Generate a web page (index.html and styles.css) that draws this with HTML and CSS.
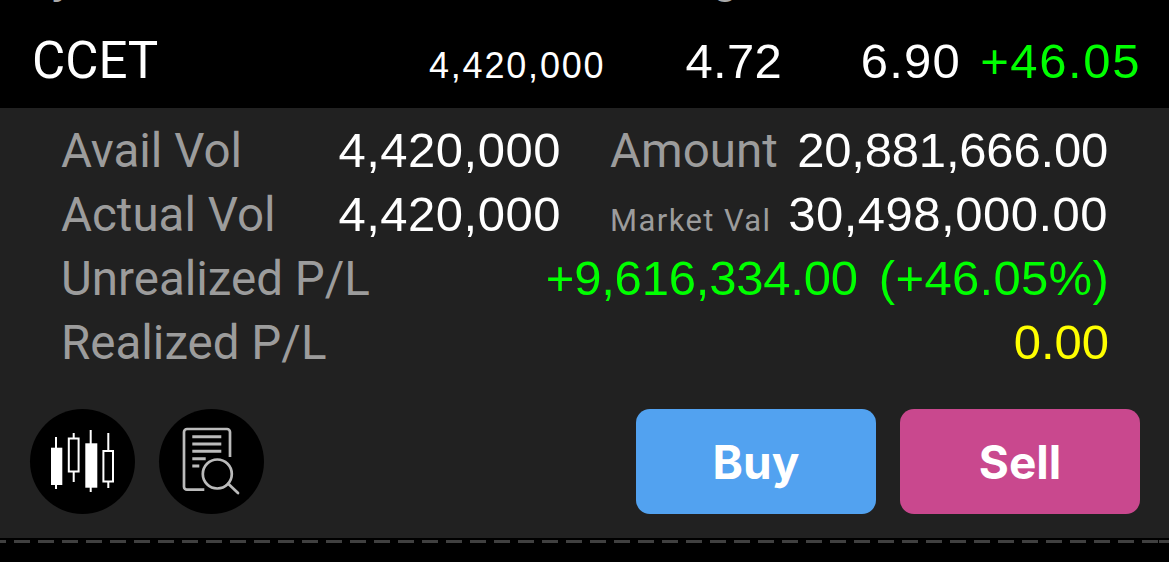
FILE: index.html
```html
<!DOCTYPE html>
<html lang="en">
<head>
    <meta charset="UTF-8">
    <meta name="viewport" content="width=device-width, initial-scale=1.0">
    <title>Portfolio</title>
    <link rel="stylesheet" href="styles.css">
</head>
<body>
    <div class="prev-row"><span class="prev-name">y</span><span class="prev-cell">g</span></div>

    <div class="stock-row">
        <div class="stock-name">CCET</div>
        <div class="stock-vol">4,420,000</div>
        <div class="stock-cost">4.72</div>
        <div class="stock-last">6.90</div>
        <div class="stock-pct">+46.05</div>
    </div>

    <div class="panel">
        <div class="pair-rows">
            <div class="pair"><span class="label">Avail Vol</span><span class="val-vol">4,420,000</span></div>
            <div class="pair"><span class="label">Amount</span><span class="val-narrow">20,881,666.00</span></div>
            <div class="pair"><span class="label">Actual Vol</span><span class="val-vol">4,420,000</span></div>
            <div class="pair"><span class="label label-small">Market Val</span><span class="val-wide">30,498,000.00</span></div>
        </div>
        <div class="pair"><span class="label">Unrealized P/L</span><span class="up">+9,616,334.00<span class="up-pct">(+46.05%)</span></span></div>
        <div class="pair"><span class="label">Realized P/L</span><span class="flat">0.00</span></div>

        <div class="actions">
            <div class="round-btn">
                <svg viewBox="0 0 105 105" width="105" height="105">
                    <g stroke="#fff" stroke-width="2" fill="none">
                        <path d="M26 28v52M43.7 24v49M60.7 21v62M78.3 24v55"/>
                    </g>
                    <rect x="21" y="38.7" width="11.3" height="37.3" fill="#fff"/>
                    <rect x="38.8" y="29.5" width="9.8" height="33" fill="#000" stroke="#fff" stroke-width="2"/>
                    <rect x="55.3" y="34.3" width="12" height="44.4" fill="#fff"/>
                    <rect x="73.4" y="42" width="9.6" height="30.5" fill="#000" stroke="#fff" stroke-width="2"/>
                </svg>
            </div>
            <div class="round-btn">
                <svg viewBox="0 0 105 105" width="105" height="105">
                    <g stroke="#bbb" fill="none">
                        <path stroke-width="2.7" d="M45.3 80.7H28a3 3 0 0 1-3-3V23a3 3 0 0 1 3-3h40a3 3 0 0 1 3 3v25"/>
                        <path stroke-width="3" d="M33.3 27.7h29M33.3 35h29M33.3 42.3h29M33.3 49.7h13.4M33.3 57h7"/>
                        <circle stroke-width="2.7" cx="58.3" cy="65" r="14.5"/>
                        <path stroke-width="2.7" stroke-linecap="round" d="M69.5 75l9.5 9"/>
                    </g>
                </svg>
            </div>
            <div class="trade-btn buy">Buy</div>
            <div class="trade-btn sell">Sell</div>
        </div>
    </div>

    <div class="divider"></div>
</body>
</html>
```

FILE: styles.css
```css
* { box-sizing: border-box; }
body { margin: 0; background-color: #000; color: #fff; font-family: "Liberation Sans", sans-serif; height: 562px; overflow: hidden; }

.prev-row { display: flex; align-items: flex-end; height: 3px; overflow: hidden; font-size: 48px; color: #aaa; }
.prev-name { margin-left: 52px; }
.prev-cell { margin-left: 636px; }

.stock-row { display: flex; align-items: baseline; height: 105px; padding: 0 28px 0 32px; font-size: 49px; line-height: 116px; }
.stock-name { flex: 1; font-family: "Roboto", sans-serif; font-size: 51px; }
.stock-vol { font-size: 36px; letter-spacing: 1.8px; width: 176px; text-align: right; }
.stock-cost { width: 177px; text-align: right; letter-spacing: 0.3px; }
.stock-last { width: 179px; text-align: right; letter-spacing: 1.2px; }
.stock-pct { width: 180px; text-align: right; color: #0f0; letter-spacing: 1.6px; }

.panel { background-color: #212121; height: 430px; padding: 10px 60px 0 61px; font-size: 49px; }
.pair-rows { display: grid; grid-template-columns: 500px 498px; column-gap: 49px; }
.pair { display: flex; justify-content: space-between; align-items: baseline; height: 64px; line-height: 64px; }
.label { color: #9c9c9c; font-family: "Roboto", sans-serif; font-size: 47.5px; }
.label-small { font-size: 31px; letter-spacing: 1.4px; }
.val-vol { letter-spacing: 0.5px; }
.val-narrow { letter-spacing: -0.2px; }
.val-wide { letter-spacing: 0.5px; }
.up { color: #0f0; letter-spacing: -0.2px; }
.up-pct { margin-left: 21px; letter-spacing: 0.3px; }
.flat { color: #ff0; }

.actions { display: flex; align-items: center; gap: 24px; margin: 35px -31px 0 -31px; }
.round-btn { width: 105px; height: 105px; border-radius: 50%; background-color: #000; flex: none; }
.round-btn svg { display: block; }
.trade-btn { width: 240px; height: 105px; flex: none; border-radius: 14px; display: flex; align-items: center; justify-content: center; font-family: "Inter", "Liberation Sans", sans-serif; font-size: 46px; font-weight: 700; }
.round-btn + .trade-btn { margin-left: 348px; }
.buy { background-color: #52a2f0; }
.sell { background-color: #c9488e; }

.divider { height: 3px; margin-top: 2px; background-image: repeating-linear-gradient(to right, #404040 0 16px, #000 16px 24px); background-position: -10px 0; }
```
